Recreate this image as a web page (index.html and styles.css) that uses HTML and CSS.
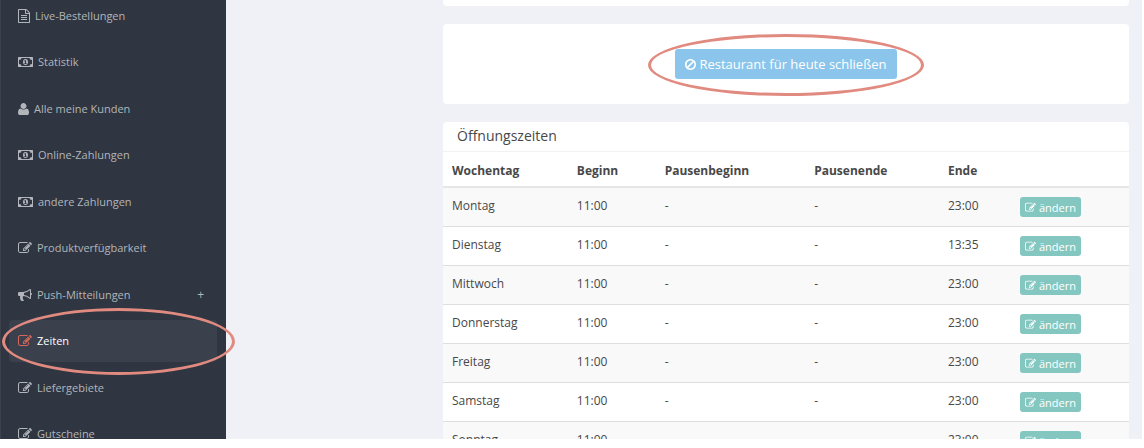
FILE: index.html
```html
<!DOCTYPE html>
<html lang="de">

<head>
    <meta charset="UTF-8">
    <meta name="viewport" content="width=device-width, initial-scale=1.0">
    <title>Öffnungszeiten</title>
    <link rel="stylesheet" href="styles.css">
</head>

<body>
    <svg class="sprite" aria-hidden="true">
        <symbol id="edit" viewBox="0 0 1792 1792">
            <path d="M888 1184l116-116-152-152-116 116v56h96v96h56zm440-720q-16-16-33 1l-350 350q-17 17-1 33t33-1l350-350q17-17 1-33zm80 594v190q0 119-84.5 203.5t-203.5 84.5h-832q-119 0-203.5-84.5t-84.5-203.5v-832q0-119 84.5-203.5t203.5-84.5h832q63 0 117 25 15 7 18 23 3 17-9 29l-49 49q-14 14-32 8-23-6-45-6h-832q-66 0-113 47t-47 113v832q0 66 47 113t113 47h832q66 0 113-47t47-113v-126q0-13 9-22l64-64q15-15 35-7t20 29zm-96-738l288 288-672 672h-288v-288zm444 132l-92 92-288-288 92-92q28-28 68-28t68 28l152 152q28 28 28 68t-28 68z"/>
        </symbol>
        <symbol id="ban" viewBox="128 128 1536 1536">
            <path d="M1440 893q0-161-87-295l-754 753q137 89 297 89 111 0 211.5-43.5t173.5-116.5 116-174.5 43-212.5zm-999 299l755-754q-135-91-300-91-148 0-273 73t-198 199-73 274q0 162 89 299zm1223-299q0 157-61 300t-163.5 246-245 164-298.5 61-298.5-61-245-164-163.5-246-61-300 61-299.5 163.5-245.5 245-164 298.5-61 298.5 61 245 164 163.5 245.5 61 299.5z"/>
        </symbol>
        <symbol id="file" viewBox="128 0 1536 1792">
            <path d="M1596 380q28 28 48 76t20 88v1152q0 40-28 68t-68 28h-1344q-40 0-68-28t-28-68v-1600q0-40 28-68t68-28h896q40 0 88 20t76 48zm-444-244v376h376q-10-29-22-41l-313-313q-12-12-41-22zm384 1528v-1024h-416q-40 0-68-28t-28-68v-416h-768v1536h1280zm-1024-864q0-14 9-23t23-9h704q14 0 23 9t9 23v64q0 14-9 23t-23 9h-704q-14 0-23-9t-9-23v-64zm736 224q14 0 23 9t9 23v64q0 14-9 23t-23 9h-704q-14 0-23-9t-9-23v-64q0-14 9-23t23-9h704zm0 256q14 0 23 9t9 23v64q0 14-9 23t-23 9h-704q-14 0-23-9t-9-23v-64q0-14 9-23t23-9h704z"/>
        </symbol>
        <symbol id="user" viewBox="192 128 1408 1536">
            <path d="M1600 1405q0 120-73 189.5t-194 69.5h-874q-121 0-194-69.5t-73-189.5q0-53 3.5-103.5t14-109 26.5-108.5 43-97.5 62-81 85.5-53.5 111.5-20q9 0 42 21.5t74.5 48 108 48 133.5 21.5 133.5-21.5 108-48 74.5-48 42-21.5q61 0 111.5 20t85.5 53.5 62 81 43 97.5 26.5 108.5 14 109 3.5 103.5zm-320-893q0 159-112.5 271.5t-271.5 112.5-271.5-112.5-112.5-271.5 112.5-271.5 271.5-112.5 271.5 112.5 112.5 271.5z"/>
        </symbol>
        <symbol id="horn" viewBox="0 0 1792 1792">
            <path d="M1664 640q53 0 90.5 37.5t37.5 90.5-37.5 90.5-90.5 37.5v384q0 52-38 90t-90 38q-417-347-812-380-58 19-91 66t-31 100.5 40 92.5q-20 33-23 65.5t6 58 33.5 55 48 50 61.5 50.5q-29 58-111.5 83t-168.5 11.5-132-55.5q-7-23-29.5-87.5t-32-94.5-23-89-15-101 3.5-98.5 22-110.5h-122q-66 0-113-47t-47-113v-192q0-66 47-113t113-47h480q435 0 896-384 52 0 90 38t38 90v384zm-128 604v-954q-394 302-768 343v270q377 42 768 341z"/>
        </symbol>
        <symbol id="money" viewBox="0 0 30 20">
            <path fill-rule="evenodd" d="M1 0h28q1 0 1 1v18q0 1-1 1h-28q-1 0-1-1v-18q0-1 1-1zM7 2q0 4-5 4v8q5 0 5 4h16q0-4 5-4v-8q-5 0-5-4zM15 4q5 0 5 6t-5 6-5-6 5-6zM14 6.500l-2 1.500 1 1.200 1-.6v3.900h-1.500v1.500h5v-1.500h-1.500v-6z"/>
        </symbol>
    </svg>

    <div class="app">
        <nav class="sidebar">
            <ul class="menu">
                <li><a href="#"><svg class="icon file"><use href="#file"/></svg>Live-Bestellungen</a></li>
                <li><a href="#"><svg class="icon money"><use href="#money"/></svg>Statistik</a></li>
                <li><a href="#"><svg class="icon user"><use href="#user"/></svg>Alle meine Kunden</a></li>
                <li><a href="#"><svg class="icon money"><use href="#money"/></svg>Online-Zahlungen</a></li>
                <li><a href="#"><svg class="icon money"><use href="#money"/></svg>andere Zahlungen</a></li>
                <li><a href="#"><svg class="icon"><use href="#edit"/></svg>Produktverfügbarkeit</a></li>
                <li><a href="#"><svg class="icon"><use href="#horn"/></svg>Push-Mitteilungen<span class="plus">+</span></a></li>
                <li class="active"><a href="#"><svg class="icon"><use href="#edit"/></svg>Zeiten</a><span class="ring"></span></li>
                <li><a href="#"><svg class="icon"><use href="#edit"/></svg>Liefergebiete</a></li>
                <li><a href="#"><svg class="icon"><use href="#edit"/></svg>Gutscheine</a></li>
            </ul>
        </nav>

        <main class="content">
            <section class="card top"></section>

            <section class="card close-today">
                <div class="close-box">
                    <button type="button" class="btn-close"><svg class="icon ban"><use href="#ban"/></svg>Restaurant für heute schließen</button>
                    <span class="ring"></span>
                </div>
            </section>

            <section class="card">
                <h2>Öffnungszeiten</h2>
                <table>
                    <thead>
                        <tr>
                            <th class="day">Wochentag</th>
                            <th class="begin">Beginn</th>
                            <th class="pause-begin">Pausenbeginn</th>
                            <th class="pause-end">Pausenende</th>
                            <th class="end">Ende</th>
                            <th></th>
                        </tr>
                    </thead>
                    <tbody>
                        <tr>
                            <td>Montag</td>
                            <td>11:00</td>
                            <td>-</td>
                            <td>-</td>
                            <td>23:00</td>
                            <td><button type="button" class="btn-edit"><svg class="icon"><use href="#edit"/></svg>ändern</button></td>
                        </tr>
                        <tr>
                            <td>Dienstag</td>
                            <td>11:00</td>
                            <td>-</td>
                            <td>-</td>
                            <td>13:35</td>
                            <td><button type="button" class="btn-edit"><svg class="icon"><use href="#edit"/></svg>ändern</button></td>
                        </tr>
                        <tr>
                            <td>Mittwoch</td>
                            <td>11:00</td>
                            <td>-</td>
                            <td>-</td>
                            <td>23:00</td>
                            <td><button type="button" class="btn-edit"><svg class="icon"><use href="#edit"/></svg>ändern</button></td>
                        </tr>
                        <tr>
                            <td>Donnerstag</td>
                            <td>11:00</td>
                            <td>-</td>
                            <td>-</td>
                            <td>23:00</td>
                            <td><button type="button" class="btn-edit"><svg class="icon"><use href="#edit"/></svg>ändern</button></td>
                        </tr>
                        <tr>
                            <td>Freitag</td>
                            <td>11:00</td>
                            <td>-</td>
                            <td>-</td>
                            <td>23:00</td>
                            <td><button type="button" class="btn-edit"><svg class="icon"><use href="#edit"/></svg>ändern</button></td>
                        </tr>
                        <tr>
                            <td>Samstag</td>
                            <td>11:00</td>
                            <td>-</td>
                            <td>-</td>
                            <td>23:00</td>
                            <td><button type="button" class="btn-edit"><svg class="icon"><use href="#edit"/></svg>ändern</button></td>
                        </tr>
                        <tr>
                            <td>Sonntag</td>
                            <td>11:00</td>
                            <td>-</td>
                            <td>-</td>
                            <td>23:00</td>
                            <td><button type="button" class="btn-edit"><svg class="icon"><use href="#edit"/></svg>ändern</button></td>
                        </tr>
                    </tbody>
                </table>
            </section>
        </main>
    </div>
</body>

</html>
```
FILE: styles.css
```css
* {
    box-sizing: border-box;
}

body {
    margin: 0;
    background-color: #fff;
    color: #484848;
    font: 12px/18px "Open Sans", sans-serif;
}

button {
    border: none;
    font-family: inherit;
    color: #fff;
    cursor: pointer;
}

.sprite {
    display: none;
}

.icon {
    flex: none;
    width: 14px;
    height: 14px;
    fill: currentColor;
}

.app {
    display: flex;
    height: calc(100vh - 9px);
    margin-right: 2px;
    overflow: hidden;
    background-color: #f0f1f7;
}

/* sidebar */
.sidebar {
    flex: none;
    width: 226px;
    border-left: 1px solid #3b424e;
    background-color: #2f3541;
}

.menu {
    display: flex;
    flex-direction: column;
    justify-content: space-between;
    height: calc(100% + 21px);
    margin: -5px 0 0;
    padding: 0 9px 0 8px;
    list-style: none;
}

.menu>li {
    position: relative;
}

.menu a {
    display: flex;
    align-items: center;
    gap: 5px;
    height: 42px;
    padding: 0 13px 0 9px;
    border-radius: 4px;
    color: #b2b5ba;
    font-size: 11px;
    text-decoration: none;
}

.menu .file {
    width: 12px;
}

.menu .money {
    width: 15px;
    height: 10px;
}

.menu .user {
    width: 11px;
    height: 12px;
}

.menu .plus {
    margin-left: auto;
    font-size: 12px;
}

.menu .active a {
    background-color: #3a404c;
    color: #fff;
}

.menu .active .icon {
    color: #d9665a;
}

/* hand drawn marker around the important controls */
.ring {
    position: absolute;
    z-index: 2;
    border: 3px solid #e08a80;
    border-radius: 50%;
    pointer-events: none;
}

.menu .ring {
    top: -12px;
    right: -18px;
    bottom: -13px;
    left: -7px;
}

/* content */
.content {
    flex: 1;
    display: flex;
    flex-direction: column;
    gap: 18px;
    padding: 0 13px 0 217px;
}

.card {
    flex: none;
    border-radius: 4px;
    background-color: #fff;
}

.card.top {
    height: 6px;
    border-radius: 0 0 4px 4px;
}

.close-today {
    display: flex;
    justify-content: center;
    padding: 25px;
}

.close-box {
    position: relative;
}

.close-box .ring {
    top: -15px;
    right: -27px;
    bottom: -17px;
    left: -27px;
}

.btn-close {
    display: flex;
    align-items: center;
    gap: 3px;
    height: 30px;
    padding: 0 10px;
    border-radius: 3px;
    background-color: #8bc5eb;
    font-size: 13px;
}

.btn-close .ban {
    width: 11px;
    height: 11px;
}

h2 {
    margin: 0;
    padding: 4px 14px 5px;
    border-bottom: 1px solid #f2f2f4;
    font-size: 14px;
    font-weight: 400;
    line-height: 20px;
}

table {
    width: 100%;
    table-layout: fixed;
    border-collapse: collapse;
}

th,
td {
    padding: 9px;
    text-align: left;
    vertical-align: top;
}

th {
    padding: 10px 9px 6px;
    border-bottom: 2px solid #e6e6e6;
}

td {
    height: 39px;
    border-bottom: 1px solid #dedede;
}

tbody tr:nth-child(odd) {
    background-color: #f9f9f9;
}

.day {
    width: 18.2%;
}

.begin {
    width: 12.8%;
}

.pause-begin {
    width: 21.8%;
}

.pause-end {
    width: 19.5%;
}

.end {
    width: 10.5%;
}

.btn-edit {
    display: flex;
    align-items: center;
    gap: 3px;
    height: 20px;
    padding: 0 5px;
    border-radius: 3px;
    background-color: #84c7c0;
    font-size: 11px;
}

.btn-edit .icon {
    width: 11px;
    height: 11px;
}
```
